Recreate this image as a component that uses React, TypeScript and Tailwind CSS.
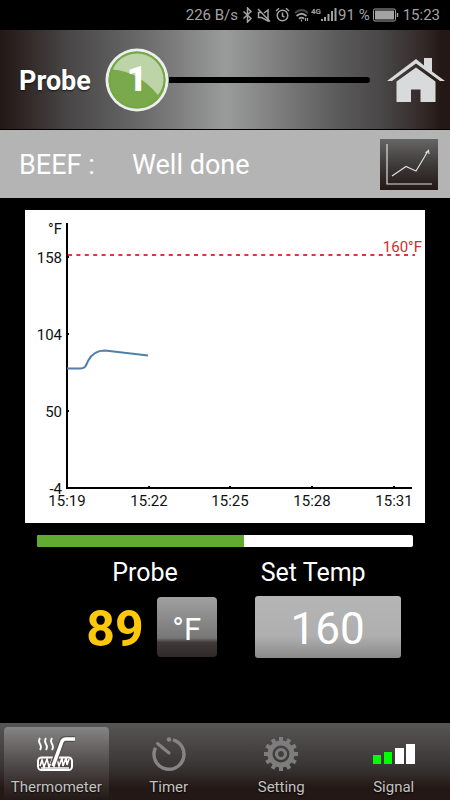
import { useState, type ReactNode } from "react";

const Y_TICKS = [
  { label: "158", y: 47 },
  { label: "104", y: 124 },
  { label: "50", y: 201 },
  { label: "-4", y: 278 },
];

const X_TICKS = [
  { label: "15:19", x: 42 },
  { label: "15:22", x: 124 },
  { label: "15:25", x: 205 },
  { label: "15:28", x: 287 },
  { label: "15:31", x: 369 },
];

function StatusBar() {
  return (
    <div className="flex h-[30px] items-center justify-end bg-black pr-[10px] text-[15px] text-[#a3a3a3]">
      <span>226 B/s</span>
      <svg className="ml-1" width="11" height="16" viewBox="0 0 11 16" fill="none" stroke="currentColor" strokeWidth="1.5">
        <path d="M1.500 4.500 9 11.500 5.500 15V1L9 4.500 1.500 11.500" />
      </svg>
      <svg className="ml-1" width="14" height="16" viewBox="0 0 14 16" fill="none" stroke="currentColor" strokeWidth="1.500">
        <path d="M1 2l12 12.500M5 5.500H1.500v5H4.500L11 14V3L7 6" />
      </svg>
      <svg className="ml-1" width="15" height="16" viewBox="0 0 15 16" fill="none" stroke="currentColor" strokeWidth="1.500">
        <circle cx="7.500" cy="8.500" r="5.300" />
        <path d="M7.500 5.500v3.500l2 1.200M1 4l3-2.700M14 4l-3-2.700" />
      </svg>
      <svg className="ml-1" width="16" height="16" viewBox="0 0 16 16" fill="none" stroke="currentColor" strokeWidth="1.800">
        <path d="M1 6q6.500-6 13 0" opacity=".45" />
        <path d="M2.500 9q5-4.500 10 0M5 11.700q2.500-2.200 5 0" />
        <path d="M7.500 12.500v2M11.500 11v3M13.500 11v3" strokeWidth="1.200" />
      </svg>
      <span className="ml-px self-start pt-2 text-[8px] leading-[8px] font-bold">4G</span>
      <svg width="16" height="14" viewBox="0 0 16 14" fill="currentColor">
        <path d="M0 11h2v2H0zM3 9h2v4H3zM6.500 6h2v7h-2zM10 3h2v10h-2zM13.500 0h2v13h-2z" />
      </svg>
      <span className="ml-px">91 %</span>
      <svg className="ml-[3px]" width="26" height="14" viewBox="0 0 26 14">
        <rect x=".5" y="1" width="22" height="12" rx="1.500" fill="none" stroke="currentColor" />
        <rect x="2" y="2.500" width="19" height="9" fill="currentColor" />
        <path d="M24.500 5v4" stroke="currentColor" strokeWidth="1.500" />
      </svg>
      <span className="ml-1">15:23</span>
    </div>
  );
}

function Header() {
  return (
    <header className="flex h-[99px] items-center bg-[linear-gradient(90deg,#231815_0%,#2e2624_5%,#484646_15%,#5c5b5b_25%,#7a7a7a_38%,#9a9c9b_50%,#7a7a7a_63%,#5c5b5b_75%,#484646_85%,#332a28_94%,#231815_98%)] pr-[5px] pl-[19px] text-white">
      <h1 className="w-[86px] pt-1 text-[27px] font-bold [text-shadow:0_1px_2px_rgba(0,0,0,0.7)]">Probe</h1>
      <button className="grid size-[64px] shrink-0 place-items-center" aria-label="Probe 1">
        <svg className="col-start-1 row-start-1" width="64" height="64" viewBox="0 0 64 64">
          <circle cx="32" cy="32" r="31.500" fill="#ecefee" />
          <circle cx="32" cy="32" r="28.500" fill="#79a94b" />
          <path d="M7.500 21.500A26.500 26.500 0 1 1 53 47Q33 23 7.500 21.500z" fill="#bdd3a8" />
          <circle cx="32" cy="32" r="27.500" fill="none" stroke="#74a843" strokeWidth="2" />
        </svg>
        <span className="col-start-1 row-start-1 text-[35px] leading-none font-black">1</span>
      </button>
      <div className="h-[6px] flex-1 rounded-r-full bg-black" />
      <a href="#home" aria-label="Home" className="ml-[17px]">
        <svg width="58" height="44" viewBox="0 0 58 44" fill="#d9dadb">
          <path d="M29 1 37 7.500V0H45v13.500L58 23H53L29 5.500 5 23H0z" />
          <path d="M29 9.500 48.500 23.500V44H33.500V31.500H24V44H9.500V23.500z" />
        </svg>
      </a>
    </header>
  );
}

function Chart() {
  return (
    <svg className="block w-full bg-white" viewBox="0 0 400 313" fontSize="15" role="img" aria-label="Probe temperature">
      <g fill="#111">
        <text x="37" y="24" textAnchor="end">°F</text>
        {Y_TICKS.map((t) => (
          <text key={t.label} x="37" y={t.y + 6} textAnchor="end">
            {t.label}
          </text>
        ))}
        {X_TICKS.map((t) => (
          <text key={t.label} x={t.x} y="296" textAnchor="middle">
            {t.label}
          </text>
        ))}
      </g>
      <g stroke="#000" strokeWidth="2">
        <path d="M42 13V278H387" fill="none" />
        {Y_TICKS.map((t) => (
          <path key={t.label} d={`M42 ${t.y}h2`} />
        ))}
        {X_TICKS.map((t) => (
          <path key={t.label} d={`M${t.x} 276v2`} />
        ))}
      </g>
      <path d="M43 45H390" stroke="#d43b3b" strokeWidth="2" strokeDasharray="4 4.400" />
      <text x="397" y="42" textAnchor="end" fill="#c9302c">160°F</text>
      <path
        d="M42 158.500H55C61 158.500 61 155 63 151C66 145 71 140.500 80 140.500L123 145.500"
        fill="none"
        stroke="#4f80ab"
        strokeWidth="2"
      />
    </svg>
  );
}

function ThermometerIcon() {
  return (
    <svg width="40" height="36" viewBox="0 0 40 36" fill="none" stroke="#fff">
      <path d="M4 2q-2 3 0 6t0 6M10 2q-2 3 0 6t0 6M16 2q-2 3 0 6t0 6" strokeWidth="1.800" />
      <rect x="2" y="21.500" width="34" height="12.500" rx="3.500" strokeWidth="2" />
      <path d="M4 30 6 24l2 7 3-8 2 8 3-7 2 6 3-7 2 7 3-8 1 8 3-8 1 7 2-6M5 32h28" strokeWidth="1.600" />
      <path d="M17 29 26 5.500Q27 3 30 3H39" stroke="#55514f" strokeWidth="6" />
      <path d="M17 30 26 5.500Q27 3 30 3H39" strokeWidth="3.500" />
    </svg>
  );
}

function TimerIcon() {
  return (
    <svg width="34" height="36" viewBox="0 0 34 36" fill="none" stroke="#858585">
      <path d="M3.500 11.700A15 15 0 1 0 21 3.800" strokeWidth="3.400" />
      <path d="M5.500 7.500 17 17" strokeWidth="3" strokeLinecap="round" />
      <circle cx="17" cy="3.500" r="2.300" fill="#858585" stroke="none" />
    </svg>
  );
}

function GearIcon() {
  return (
    <svg width="34" height="36" viewBox="0 0 34 36" fill="none" stroke="#7d7d7d">
      {Array.from({ length: 12 }, (_, i) => (
        <path key={i} d="M17 1v5" strokeWidth="4" transform={`rotate(${i * 30} 17 18)`} />
      ))}
      <circle cx="17" cy="18" r="11" strokeWidth="5" />
      <circle cx="17" cy="18" r="4.500" strokeWidth="3.200" />
    </svg>
  );
}

function SignalIcon() {
  return (
    <svg width="42" height="36" viewBox="0 0 42 36">
      <path d="M0 19h8v9H0zM11 16h8v12h-8z" fill="#0f0" />
      <path d="M22 12h9v16h-9zM33 8h9v20h-9z" fill="#fff" />
    </svg>
  );
}

const TABS: { name: string; icon: ReactNode }[] = [
  { name: "Thermometer", icon: <ThermometerIcon /> },
  { name: "Timer", icon: <TimerIcon /> },
  { name: "Setting", icon: <GearIcon /> },
  { name: "Signal", icon: <SignalIcon /> },
];

export default function App() {
  const [tab, setTab] = useState("Thermometer");
  const [target, setTarget] = useState("160");

  return (
    <div className="flex min-h-screen flex-col bg-black font-[Roboto,sans-serif] text-white">
      <StatusBar />
      <Header />

      <section className="mt-px flex h-[68px] items-center bg-[#b4b4b4] pr-3 pl-[19px] text-[27px]">
        <h2 className="w-[113px] pt-[3px]">BEEF :</h2>
        <span className="flex-1 pt-[3px]">Well done</span>
        <button
          aria-label="Show graph"
          className="bg-linear-to-b from-[#666] via-[#3e3b3a] to-[#231815]"
        >
          <svg width="58" height="51" viewBox="0 0 58 51" fill="none" stroke="#ddd" strokeWidth="1.200">
            <path d="M7 5V45H52" />
            <path d="M12 37 26 27.500 36 32 48 12M45.500 14 48.500 11.500 49 15" />
          </svg>
        </button>
      </section>

      <main className="px-[25px] pt-3">
        <Chart />
        <div className="mx-3 mt-3 h-3 overflow-hidden rounded-[2px] bg-white">
          <div className="h-full bg-[#62ab31]" style={{ width: "55%" }} />
        </div>

        <div className="mt-[10px] flex justify-center gap-[38px] pl-[37px]">
          <div className="flex flex-col">
            <h3 className="pl-[26px] text-[25px] leading-[32px]">Probe</h3>
            <div className="mt-2 flex items-center gap-[13px]">
              <output className="pt-1 text-[50px] leading-[56px] font-bold text-[#fdc70c]">89</output>
              <button className="size-[60px] rounded-[4px] bg-[linear-gradient(180deg,#a0a0a0,#777_68%,#3e3938_76%,#302a29)] pt-1 text-[31px] leading-none">
                °F
              </button>
            </div>
          </div>
          <div className="flex flex-col">
            <label htmlFor="set-temp" className="px-[6px] text-[25px] leading-[32px]">
              Set Temp
            </label>
            <input
              id="set-temp"
              inputMode="numeric"
              value={target}
              onChange={(e) => setTarget(e.target.value)}
              className="mt-[7px] h-[62px] w-[146px] rounded-[3px] bg-[linear-gradient(180deg,#b5b5b5,#afafaf_65%,#8a8a8a)] pt-1 text-center text-[44px] outline-none"
            />
          </div>
        </div>
      </main>

      <nav className="mt-auto grid h-[77px] grid-cols-4 bg-[linear-gradient(180deg,#575555,#3a3635_55%,#231815_85%)]">
        {TABS.map(({ name, icon }) => (
          <button
            key={name}
            onClick={() => setTab(name)}
            className={`m-1 mb-0 flex flex-col items-center rounded-t-[4px] pt-[9px] text-[15px] leading-[20px] text-[#c4c2c1] ${
              tab === name ? "bg-linear-to-b from-[#858585] via-[#504c4b] to-[#231815]" : ""
            }`}
          >
            {icon}
            <span className="mt-[5px] [text-shadow:0_1px_2px_#000]">{name}</span>
          </button>
        ))}
      </nav>
    </div>
  );
}
